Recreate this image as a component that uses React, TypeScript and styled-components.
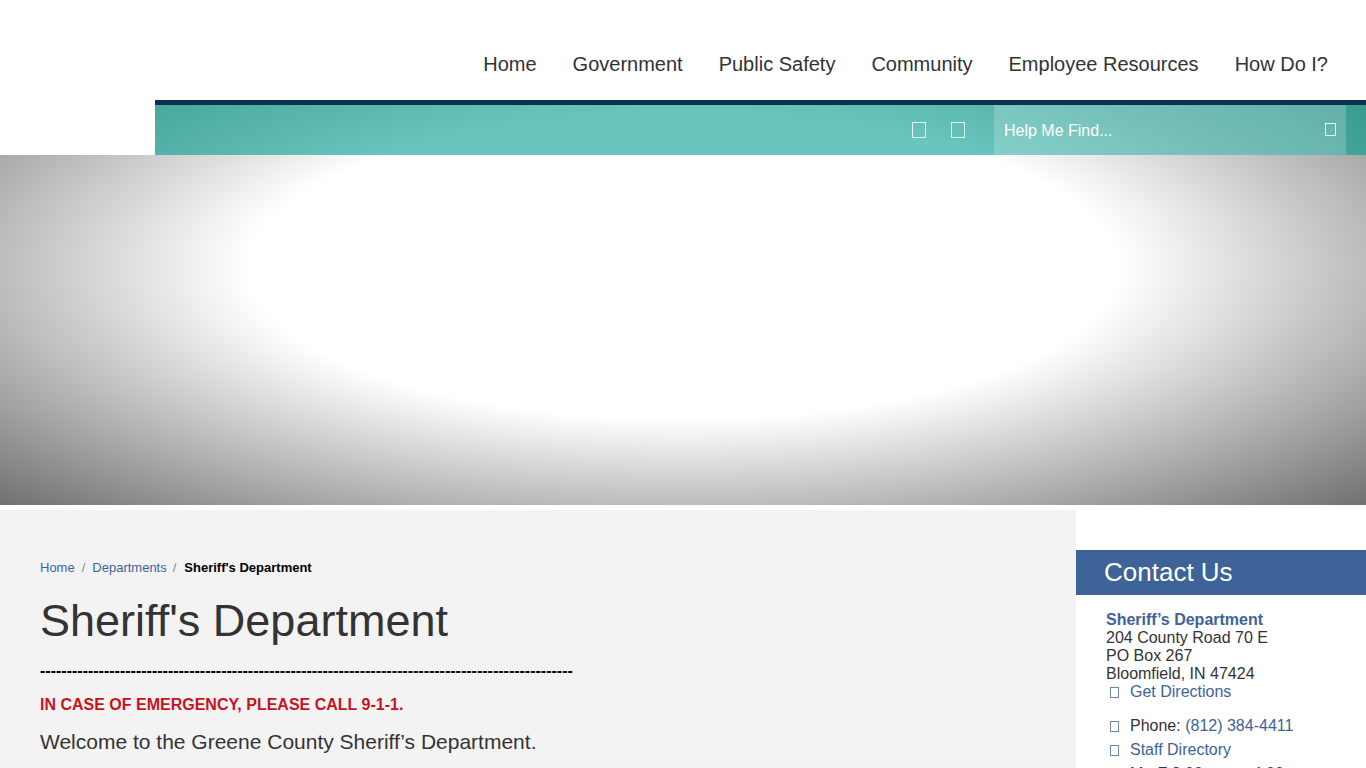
import React from "react";
import styled, { createGlobalStyle } from "styled-components";

const GlobalStyle = createGlobalStyle`
  *, *::before, *::after { box-sizing: border-box; }
  html { scrollbar-width: none; }
  body {
    margin: 0;
    background: #fff;
    color: #333;
    font: 16px/18px "Liberation Sans", Arial, sans-serif;
  }
  a { color: #3d6398; text-decoration: none; }
  p, h1, h2, address, ul, ol { margin: 0; padding: 0; font-style: normal; list-style: none; }
`;

const Page = styled.div`
  display: flex;
  flex-direction: column;
  min-height: 100vh;
`;

const Header = styled.header`
  flex: none;
  margin-left: 155px;
`;

const MainNav = styled.nav`
  display: flex;
  justify-content: flex-end;
  align-items: center;
  gap: 36px;
  height: 100px;
  padding: 28px 38px 0 0;
`;

const NavLink = styled.a`
  color: #333;
  font-size: 20px;
  line-height: 24px;
`;

const Toolbar = styled.div`
  display: flex;
  justify-content: flex-end;
  height: 55px;
  padding-right: 20px;
  border-top: 5px solid #0e2f4f;
  background: radial-gradient(71vw 336px at calc(50vw - 155px) 162px, #69c5bd 45%, #278b80 100%);
`;

const SocialLinks = styled.div`
  display: flex;
  align-items: center;
  gap: 25px;
  padding-right: 29px;
`;

const SocialLink = styled.a`
  display: flex;
`;

const Search = styled.form`
  display: flex;
  align-items: center;
  width: 352px;
  padding: 0 10px;
  background: rgba(255, 255, 255, 0.2);
`;

const SearchInput = styled.input`
  flex: 1;
  min-width: 0;
  padding: 2px 0 0;
  border: 0;
  outline: 0;
  background: transparent;
  color: #fff;
  font: 16px/20px "Liberation Sans", Arial, sans-serif;
  &::placeholder { color: #fff; opacity: 1; }
`;

const SearchButton = styled.button`
  display: flex;
  padding: 0 0 2px;
  border: 0;
  background: transparent;
`;

const Glyph = styled.span<{ $w: number; $h: number; $color: string }>`
  display: block;
  flex: none;
  width: ${(p) => p.$w}px;
  height: ${(p) => p.$h}px;
  border: 1px solid ${(p) => p.$color};
`;

const Hero = styled.div`
  flex: none;
  height: 350px;
  background: radial-gradient(ellipse at center, rgba(0, 0, 0, 0) 45%, rgba(0, 0, 0, 0.56) 100%)
    bottom / 100% 475px no-repeat;
`;

const Columns = styled.div`
  display: flex;
  flex: 1;
  padding-top: 5px;
`;

const Main = styled.main`
  flex: 1;
  min-width: 0;
  padding: 49px 40px 0;
  background: #f3f3f3;
`;

const Breadcrumbs = styled.ol`
  display: flex;
  font-size: 13px;
  line-height: 18px;
`;

const Crumb = styled.li`
  & + &::before {
    content: "/";
    padding: 0 7px;
    color: #888;
  }
`;

const CurrentCrumb = styled(Crumb)`
  color: #000;
  font-weight: bold;
  &&::before {
    padding: 0 8px 0 6px;
    font-weight: normal;
  }
`;

const Title = styled.h1`
  padding: 19px 0 16px;
  font-size: 45px;
  font-weight: normal;
  line-height: 50px;
`;

const Rule = styled.p`
  overflow: hidden;
  color: #000;
  font-weight: bold;
  white-space: nowrap;
`;

const Alert = styled.p`
  padding-top: 16px;
  color: #c8131f;
  font-weight: bold;
`;

const Welcome = styled.p`
  padding-top: 16px;
  font-size: 21px;
  line-height: 24px;
`;

const Sidebar = styled.aside`
  flex: none;
  width: 290px;
  padding-top: 40px;
`;

const SidebarTitle = styled.h2`
  padding: 0 28px;
  background: #3d6398;
  color: #fff;
  font-size: 26px;
  font-weight: normal;
  line-height: 45px;
`;

const Contact = styled.div`
  padding: 16px 0 0 30px;
`;

const Department = styled.a`
  font-weight: bold;
`;

const ContactList = styled.ul`
  padding-top: 13px;
  line-height: 24px;
`;

const ContactRow = styled.div`
  display: flex;
  align-items: center;
  gap: 11px;
  padding-left: 4px;
`;

const ContactItem = styled(ContactRow).attrs({ as: "li" })``;

const Hours = styled.li`
  padding-left: 24px;
`;

const navItems = ["Home", "Government", "Public Safety", "Community", "Employee Resources", "How Do I?"];

export default function App() {
  return (
    <Page>
      <GlobalStyle />
      <Header>
        <MainNav aria-label="Main">
          {navItems.map((item) => (
            <NavLink key={item} href="#">{item}</NavLink>
          ))}
        </MainNav>
        <Toolbar>
          <SocialLinks>
            <SocialLink href="#" aria-label="Facebook"><Glyph $w={14} $h={16} $color="#e6f5f4" /></SocialLink>
            <SocialLink href="#" aria-label="Twitter"><Glyph $w={14} $h={16} $color="#e6f5f4" /></SocialLink>
          </SocialLinks>
          <Search role="search">
            <SearchInput type="text" aria-label="Search" placeholder="Help Me Find..." />
            <SearchButton type="button" aria-label="Submit search"><Glyph $w={11} $h={13} $color="#f0f9f8" /></SearchButton>
          </Search>
        </Toolbar>
      </Header>
      <Hero />
      <Columns>
        <Main>
          <Breadcrumbs>
            <Crumb><a href="#">Home</a></Crumb>
            <Crumb><a href="#">Departments</a></Crumb>
            <CurrentCrumb>Sheriff's Department</CurrentCrumb>
          </Breadcrumbs>
          <Title>Sheriff's Department</Title>
          <Rule>{"-".repeat(100)}</Rule>
          <Alert>IN CASE OF EMERGENCY, PLEASE CALL 9-1-1.</Alert>
          <Welcome>Welcome to the Greene County Sheriff’s Department.</Welcome>
        </Main>
        <Sidebar>
          <SidebarTitle>Contact Us</SidebarTitle>
          <Contact>
            <Department href="#">Sheriff’s Department</Department>
            <address>
              204 County Road 70 E<br />
              PO Box 267<br />
              Bloomfield, IN 47424
            </address>
            <ContactRow>
              <Glyph $w={9} $h={11} $color="#6c88b0" />
              <a href="#">Get Directions</a>
            </ContactRow>
            <ContactList>
              <ContactItem>
                <Glyph $w={9} $h={11} $color="#6c88b0" />
                <span>Phone: <a href="tel:8123844411">(812) 384-4411</a></span>
              </ContactItem>
              <ContactItem>
                <Glyph $w={9} $h={11} $color="#6c88b0" />
                <a href="#">Staff Directory</a>
              </ContactItem>
              <Hours>M - F 8:00 a.m. - 4:00 p.m.</Hours>
            </ContactList>
          </Contact>
        </Sidebar>
      </Columns>
    </Page>
  );
}
